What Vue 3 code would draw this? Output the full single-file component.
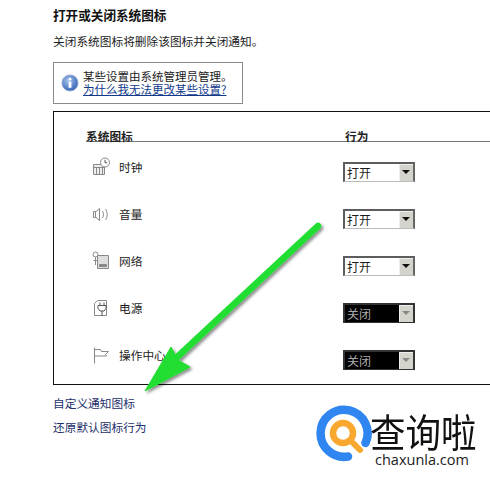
<template>
  <div class="page">
    <h1 class="title">打开或关闭系统图标</h1>
    <p class="desc">关闭系统图标将删除该图标并关闭通知。</p>

    <div class="notice">
      <svg class="info" width="18" height="18" viewBox="0 0 18 18">
        <defs>
          <radialGradient id="infoBg" cx="0.4" cy="0.35" r="0.7">
            <stop offset="0" stop-color="#a9c4ee" />
            <stop offset="1" stop-color="#2f5fb4" />
          </radialGradient>
        </defs>
        <circle cx="9" cy="9" r="8" fill="url(#infoBg)" stroke="#8fa6cf" />
        <circle cx="9" cy="5.2" r="1.4" fill="#fff" />
        <rect x="7.6" y="7.6" width="2.8" height="6.2" fill="#fff" />
      </svg>
      <div class="notice-text">
        <div>某些设置由系统管理员管理。</div>
        <a class="link">为什么我无法更改某些设置?</a>
      </div>
    </div>

    <div class="panel">
      <div class="head">
        <span class="col-name">系统图标</span>
        <span>行为</span>
      </div>
      <div v-for="row in rows" :key="row.name" class="row">
        <svg class="row-icon" width="22" height="22" viewBox="0 0 22 22" fill="none" stroke="#888" stroke-width="1">
          <template v-if="row.icon === 'clock'">
            <path d="M3.500 8.500h11v10h-11zM3.500 11.500h11M6.500 12v6M9.500 12v6M12.500 12v6" fill="#eee" />
            <circle cx="15" cy="6.500" r="4.500" fill="#fff" />
            <path d="M15 3.800v2.900h2.200" stroke="#555" />
          </template>
          <template v-else-if="row.icon === 'volume'">
            <path d="M3.500 8.500h2v6h-2zM9.500 5.500l-4 3.500v5l4 3.500z" />
            <path d="M12.500 8c1.300 2 1.300 5 0 7M15.500 6c2.200 3 2.200 8 0 11" />
          </template>
          <template v-else-if="row.icon === 'network'">
            <path d="M7.500 5.500h11v13h-11z" fill="#ddd" />
            <path d="M9.500 14.500h7v2h-7z" fill="#888" />
            <circle cx="5.500" cy="4.500" r="2.500" fill="#fff" />
            <path d="M5.500 7v8M3.500 10.500h4" />
          </template>
          <template v-else-if="row.icon === 'power'">
            <path d="M4.500 18.500v-12l3-3h9v15z" />
            <path d="M8 8.500h8v3l-2 2.500h-4l-2-2.500zM10 8.500v-3M14 8.500v-3M12 14v5" fill="#fff" stroke="#555" />
          </template>
          <template v-else>
            <path d="M4.500 3.500v16" />
            <path d="M4.500 5.500h6l1 2h7l-3 3 1 1.500h-12" />
          </template>
        </svg>
        <span class="row-name">{{ row.name }}</span>
        <div class="combo" :class="{ off: row.off }">
          <span class="combo-value">{{ row.value }}</span>
          <span class="combo-btn"><i class="caret"></i></span>
        </div>
      </div>
    </div>

    <a class="foot-link first">自定义通知图标</a>
    <a class="foot-link">还原默认图标行为</a>

    <svg class="arrow" width="490" height="490" viewBox="0 0 490 490">
      <defs>
        <filter id="arrowShadow" x="-10%" y="-10%" width="120%" height="120%">
          <feDropShadow dx="2" dy="2" stdDeviation="1.500" flood-color="#000" flood-opacity="0.45" />
        </filter>
      </defs>
      <g filter="url(#arrowShadow)" fill="#22dd33" stroke="#22dd33">
        <path d="M318 226L174 360" stroke-width="6.500" stroke-linecap="round" />
        <path d="M145 391L171 347L178 360L190 367Z" stroke-width="1" stroke-linejoin="round" />
      </g>
    </svg>

    <div class="logo">
      <svg class="logo-mark" width="60" height="60" viewBox="0 0 60 60" fill="none">
        <path d="M50.500 39A23.500 23.500 0 1 0 33 52.500" stroke="#2f86f0" stroke-width="8.500" stroke-linecap="round" />
        <circle cx="28" cy="29" r="10" stroke="#f8a82e" stroke-width="6.500" />
        <path d="M36 37l9 9" stroke="#f8a82e" stroke-width="6" stroke-linecap="round" />
      </svg>
      <div class="logo-text">
        <div class="logo-cn">查询啦</div>
        <div class="logo-en">chaxunla.com</div>
      </div>
    </div>
  </div>
</template>

<script setup>
const rows = [
  { name: '时钟', icon: 'clock', value: '打开', off: false },
  { name: '音量', icon: 'volume', value: '打开', off: false },
  { name: '网络', icon: 'network', value: '打开', off: false },
  { name: '电源', icon: 'power', value: '关闭', off: true },
  { name: '操作中心', icon: 'flag', value: '关闭', off: true },
]
</script>

<style>
html, body { margin: 0; background: #fff; overflow: hidden; }
</style>

<style scoped>
.page {
  position: relative;
  width: 490px;
  height: 490px;
  padding: 7px 0 0 53px;
  box-sizing: border-box;
  overflow: hidden;
  background: #fff;
  color: #1c1c1c;
  font: 11.700px/16px "Noto Sans CJK SC", "Liberation Sans", sans-serif;
}
.title { margin: 0; font-size: 12.600px; line-height: 16px; font-weight: 700; color: #111; }
.desc { margin: 10px 0 0; line-height: 16px; }
.notice {
  display: flex;
  align-items: center;
  gap: 4px;
  width: 190px;
  height: 42px;
  margin-top: 13px;
  padding-left: 7px;
  box-sizing: border-box;
  border: 1px solid #8b8b8b;
}
.notice-text { font-size: 11.500px; line-height: 13px; white-space: nowrap; }
.link { color: #123a8c; text-decoration: underline; }
.panel {
  width: 460px;
  height: 274px;
  margin-top: 7px;
  padding: 16px 0 0 32px;
  box-sizing: border-box;
  border: 1px solid #111;
  border-right: 0;
}
.head {
  display: flex;
  height: 13px;
  margin-bottom: 1px;
  line-height: 16px;
  border-bottom: 1px solid #777;
  font-weight: 700;
  color: #222;
}
.col-name { width: 259px; }
.row {
  display: flex;
  align-items: center;
  height: 47px;
}
.row-icon { margin: 0 7px 0 4px; flex: none; }
.row-name { width: 224px; }
.combo {
  display: flex;
  width: 72px;
  height: 20px;
  margin-top: 10px;
  box-sizing: border-box;
  border: 2px solid #5d5d5d;
  border-right-color: #666;
  border-bottom: 1px solid #bbb;
}
.combo-value { flex: 1; padding-left: 2px; line-height: 17px; font-size: 12px; }
.combo-btn {
  display: flex;
  align-items: center;
  justify-content: center;
  width: 14px;
  background: #d4d4cc;
  box-shadow: inset 1px 1px 0 #eee;
}
.caret {
  width: 0;
  height: 0;
  border: 4px solid transparent;
  border-top-color: #111;
  border-bottom: 0;
}
.combo.off { background: #000; color: #aaa; border-color: #333; }
.combo.off .caret { border-top-color: #888; }
.foot-link { display: block; line-height: 16px; color: #1d2f6b; }
.foot-link.first { margin-top: 10px; margin-bottom: 8px; }
.arrow { position: absolute; left: 0; top: 0; pointer-events: none; }
.logo { position: absolute; left: 315px; top: 404px; display: flex; }
.logo-mark { flex: none; }
.logo-text { margin-left: -5px; }
.logo-cn {
  height: 42px;
  margin-top: 6px;
  font-size: 35.500px;
  line-height: 42px;
  color: #111;
  transform: scaleY(1.100);
}
.logo-en {
  margin: 0 0 0 5px;
  font: 14.500px/16px "Open Sans", sans-serif;
  color: #222;
}
</style>
